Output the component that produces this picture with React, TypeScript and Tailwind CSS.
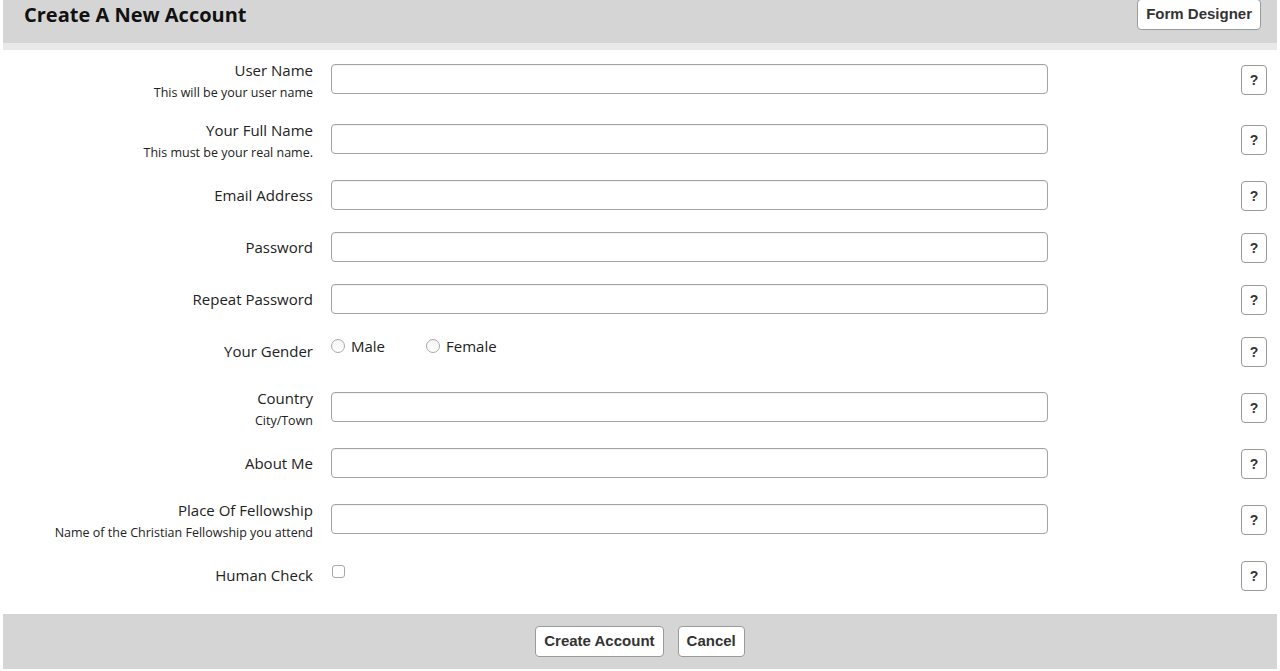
import React from "react";

type Row = {
  label: string;
  sub?: string;
  kind: "text" | "gender" | "check";
};

const rows: Row[] = [
  { label: "User Name", sub: "This will be your user name", kind: "text" },
  { label: "Your Full Name", sub: "This must be your real name.", kind: "text" },
  { label: "Email Address", kind: "text" },
  { label: "Password", kind: "text" },
  { label: "Repeat Password", kind: "text" },
  { label: "Your Gender", kind: "gender" },
  { label: "Country", sub: "City/Town", kind: "text" },
  { label: "About Me", kind: "text" },
  { label: "Place Of Fellowship", sub: "Name of the Christian Fellowship you attend", kind: "text" },
  { label: "Human Check", kind: "check" },
];

const btnFont = { fontFamily: '"Liberation Sans", Arial, sans-serif' };

function Radio({ label }: { label: string }) {
  return (
    <label className="flex items-center gap-[6px]">
      <span className="inline-block w-[14px] h-[14px] rounded-full border border-[#a8a8a8] bg-gradient-to-b from-[#f4f4f4] to-white" />
      <span className="text-[15px] leading-[20px] text-[#222]">{label}</span>
    </label>
  );
}

export default function App() {
  return (
    <div
      className="w-[1280px] h-[671px] bg-white overflow-hidden text-[#222]"
      style={{ fontFamily: '"Open Sans", "Noto Sans", sans-serif' }}
    >
      {/* Header */}
      <div className="mx-[3px] h-[43px] bg-[#d5d5d5] flex items-start justify-between">
        <h1 className="ml-[21px] mt-[1px] text-[20px] leading-[28px] font-bold text-[#111]">
          Create A New Account
        </h1>
        <button
          className="-mt-px mr-[16px] h-[31px] px-[8px] bg-white border border-[#9a9a9a] rounded-[4px] text-[15px] font-bold text-[#333]"
          style={btnFont}
        >
          Form Designer
        </button>
      </div>
      <div className="mx-[3px] h-[7px] bg-[#e9e9e9]" />

      {/* Form rows */}
      <div className="flex flex-col">
        {rows.map((r) => (
          <div
            key={r.label}
            className={`flex items-center ${r.sub ? "h-[60px]" : "h-[52px]"}`}
          >
            <div className={`w-[313px] text-right ${r.sub ? "mt-[3px]" : "-mt-[2px]"}`}>
              <div className="text-[15px] leading-[20px] text-[#222]">{r.label}</div>
              {r.sub && (
                <div className="mt-[3px] text-[12.5px] leading-[20px] text-[#222]">{r.sub}</div>
              )}
            </div>
            <div className="ml-[18px] w-[717px]">
              {r.kind === "text" && (
                <div className="mb-[3px] h-[30px] w-[717px] rounded-[4px] border border-[#a3a3a3] bg-white shadow-[inset_0_1px_1px_rgba(0,0,0,0.06)]" />
              )}
              {r.kind === "gender" && (
                <div className="mb-[12px] flex items-center gap-[41px]">
                  <Radio label="Male" />
                  <Radio label="Female" />
                </div>
              )}
              {r.kind === "check" && (
                <div className="mb-[10px] ml-px w-[13px] h-[13px] rounded-[3px] border border-[#a8a8a8] bg-white" />
              )}
            </div>
            <div className="flex-1" />
            <button
              className="mr-[13px] w-[26px] h-[30px] bg-white border border-[#9a9a9a] rounded-[4px] text-[14px] font-bold text-[#333] flex items-center justify-center"
              style={btnFont}
            >
              ?
            </button>
          </div>
        ))}
      </div>

      {/* Footer */}
      <div className="mx-[3px] mt-[12px] h-[55px] bg-[#d5d5d5] flex items-center justify-center gap-[14px]">
        <button
          className="h-[31px] px-[8px] bg-white border border-[#9a9a9a] rounded-[4px] text-[15px] font-bold text-[#333]"
          style={btnFont}
        >
          Create Account
        </button>
        <button
          className="h-[31px] px-[8px] bg-white border border-[#9a9a9a] rounded-[4px] text-[15px] font-bold text-[#333]"
          style={btnFont}
        >
          Cancel
        </button>
      </div>
    </div>
  );
}
